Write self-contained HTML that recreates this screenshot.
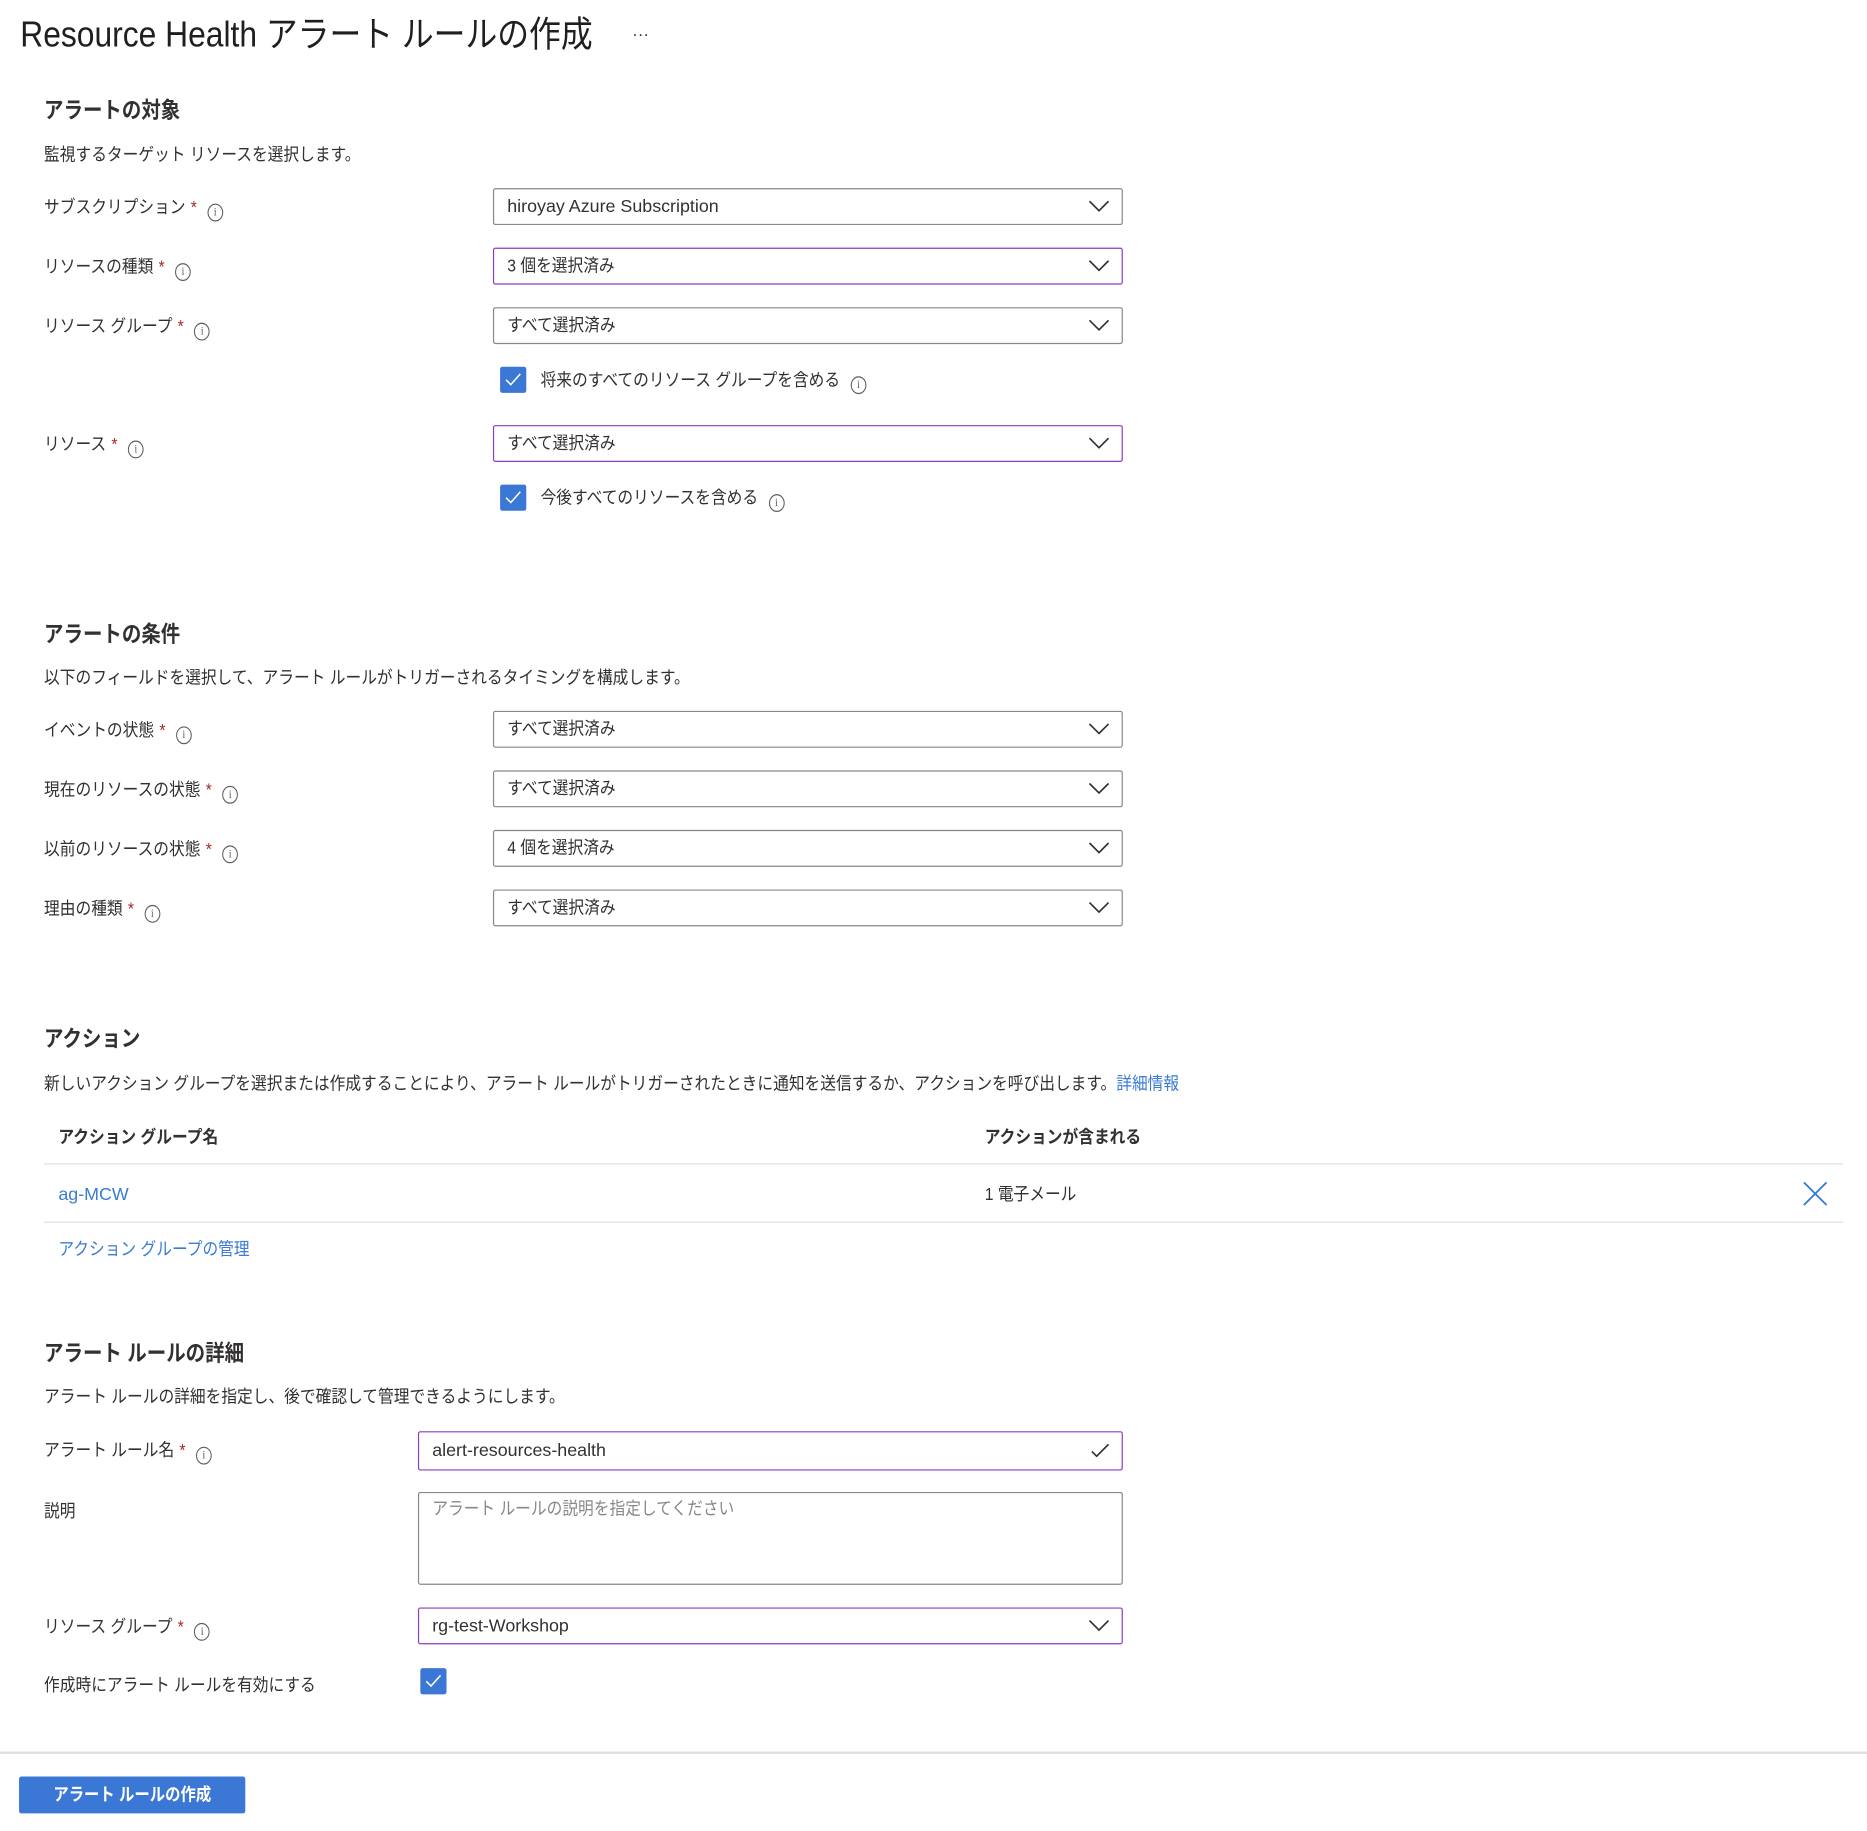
<!DOCTYPE html>
<html><head><meta charset="utf-8"><style>
*{box-sizing:border-box;margin:0;padding:0}
html,body{width:1867px;height:1831px;overflow:hidden;background:#fff}
#w{width:1568px;height:1538px;transform:scale(1.1907);transform-origin:0 0;position:relative;font-family:"Segoe UI","Liberation Sans","Noto Sans CJK JP",sans-serif;color:#323130;font-size:15px}
.a{position:absolute;white-space:nowrap;line-height:20px;transform:scaleX(.88);transform-origin:0 50%;margin-top:2px}
.n{transform:none}
.c{display:inline-block;transform:scaleX(.88);transform-origin:0 50%}
.h{font-size:19px;font-weight:bold;color:#323130;transform:scaleX(.86);margin-top:4px}
.st{color:#a4262c;margin-left:5px}
.i{display:inline-block;width:15px;height:15px;border:1px solid #605e5c;border-radius:50%;font-size:10px;line-height:13px;text-align:center;color:#605e5c;margin-left:10px;vertical-align:-2px;font-family:"Liberation Serif",serif}
.dd{position:absolute;left:414px;width:529px;height:31px;border:1px solid #8a8886;border-radius:2px;padding-left:11px;line-height:30px;white-space:nowrap}
.p{border-color:#8a3fc0}
.dd svg{position:absolute;right:10px;top:8px}
.cb{position:absolute;width:22px;height:22px;background:#3b78d6;border-radius:2px}
.cb svg{position:absolute;left:4px;top:5px}
.lk{color:#3a7bd5}
.ln{position:absolute;height:1px;background:#e1dfdd}
</style></head><body><div id="w">
<div class="a" style="left:17px;top:10px;font-size:30px;line-height:36px;color:#201f1e;transform:scaleX(.89)">Resource Health アラート ルールの作成</div>
<div class="a n" style="left:531px;top:16px;font-size:14px">···</div>

<div class="a h" style="left:37px;top:80px">アラートの対象</div>
<div class="a" style="left:37px;top:119px">監視するターゲット リソースを選択します。</div>
<div class="a" style="left:37px;top:163px">サブスクリプション<span class="st">*</span><span class="i">i</span></div>
<div class="dd" style="top:158px">hiroyay Azure Subscription<svg width="18" height="12"><path d="M1 2l8 8 8-8" fill="none" stroke="#323130" stroke-width="1.4"/></svg></div>
<div class="a" style="left:37px;top:213px">リソースの種類<span class="st">*</span><span class="i">i</span></div>
<div class="dd p" style="top:208px"><span class="c">3 個を選択済み</span><svg width="18" height="12"><path d="M1 2l8 8 8-8" fill="none" stroke="#323130" stroke-width="1.4"/></svg></div>
<div class="a" style="left:37px;top:263px">リソース グループ<span class="st">*</span><span class="i">i</span></div>
<div class="dd" style="top:258px"><span class="c">すべて選択済み</span><svg width="18" height="12"><path d="M1 2l8 8 8-8" fill="none" stroke="#323130" stroke-width="1.4"/></svg></div>
<div class="cb" style="left:420px;top:308px"><svg width="14" height="12"><path d="M1 6l4 4 8-9" fill="none" stroke="#fff" stroke-width="1.3"/></svg></div>
<div class="a" style="left:454px;top:308px">将来のすべてのリソース グループを含める<span class="i">i</span></div>
<div class="a" style="left:37px;top:362px">リソース<span class="st">*</span><span class="i">i</span></div>
<div class="dd p" style="top:357px"><span class="c">すべて選択済み</span><svg width="18" height="12"><path d="M1 2l8 8 8-8" fill="none" stroke="#323130" stroke-width="1.4"/></svg></div>
<div class="cb" style="left:420px;top:407px"><svg width="14" height="12"><path d="M1 6l4 4 8-9" fill="none" stroke="#fff" stroke-width="1.3"/></svg></div>
<div class="a" style="left:454px;top:407px">今後すべてのリソースを含める<span class="i">i</span></div>

<div class="a h" style="left:37px;top:520px">アラートの条件</div>
<div class="a" style="left:37px;top:558px">以下のフィールドを選択して、アラート ルールがトリガーされるタイミングを構成します。</div>
<div class="a" style="left:37px;top:602px">イベントの状態<span class="st">*</span><span class="i">i</span></div>
<div class="dd" style="top:597px"><span class="c">すべて選択済み</span><svg width="18" height="12"><path d="M1 2l8 8 8-8" fill="none" stroke="#323130" stroke-width="1.4"/></svg></div>
<div class="a" style="left:37px;top:652px">現在のリソースの状態<span class="st">*</span><span class="i">i</span></div>
<div class="dd" style="top:647px"><span class="c">すべて選択済み</span><svg width="18" height="12"><path d="M1 2l8 8 8-8" fill="none" stroke="#323130" stroke-width="1.4"/></svg></div>
<div class="a" style="left:37px;top:702px">以前のリソースの状態<span class="st">*</span><span class="i">i</span></div>
<div class="dd" style="top:697px"><span class="c">4 個を選択済み</span><svg width="18" height="12"><path d="M1 2l8 8 8-8" fill="none" stroke="#323130" stroke-width="1.4"/></svg></div>
<div class="a" style="left:37px;top:752px">理由の種類<span class="st">*</span><span class="i">i</span></div>
<div class="dd" style="top:747px"><span class="c">すべて選択済み</span><svg width="18" height="12"><path d="M1 2l8 8 8-8" fill="none" stroke="#323130" stroke-width="1.4"/></svg></div>

<div class="a h" style="left:37px;top:860px">アクション</div>
<div class="a" style="left:37px;top:899px">新しいアクション グループを選択または作成することにより、アラート ルールがトリガーされたときに通知を送信するか、アクションを呼び出します。<span class="lk">詳細情報</span></div>
<div class="a" style="left:49px;top:944px;font-weight:bold">アクション グループ名</div>
<div class="a" style="left:827px;top:944px;font-weight:bold">アクションが含まれる</div>
<div class="ln" style="left:37px;top:977px;width:1511px"></div>
<div class="a lk n" style="left:49px;top:992px">ag-MCW</div>
<div class="a" style="left:827px;top:992px">1 電子メール</div>
<svg style="position:absolute;left:1514px;top:992px" width="21" height="21"><path d="M1 1l19 19M20 1L1 20" stroke="#3a7bd5" stroke-width="1.6"/></svg>
<div class="ln" style="left:37px;top:1026px;width:1511px"></div>
<div class="a lk" style="left:49px;top:1038px">アクション グループの管理</div>

<div class="a h" style="left:37px;top:1124px">アラート ルールの詳細</div>
<div class="a" style="left:37px;top:1162px">アラート ルールの詳細を指定し、後で確認して管理できるようにします。</div>
<div class="a" style="left:37px;top:1207px">アラート ルール名<span class="st">*</span><span class="i">i</span></div>
<div class="dd p" style="left:351px;width:592px;top:1202px;height:33px;line-height:31px">alert-resources-health<svg style="top:9px" width="16" height="13"><path d="M1 7l4 4 10-10" fill="none" stroke="#323130" stroke-width="1.4"/></svg></div>
<div class="a" style="left:37px;top:1258px">説明</div>
<div class="dd" style="left:351px;width:592px;top:1253px;height:78px;line-height:28px;color:#8a8886"><span class="c">アラート ルールの説明を指定してください</span></div>
<div class="a" style="left:37px;top:1355px">リソース グループ<span class="st">*</span><span class="i">i</span></div>
<div class="dd p" style="left:351px;width:592px;top:1350px">rg-test-Workshop<svg width="18" height="12"><path d="M1 2l8 8 8-8" fill="none" stroke="#323130" stroke-width="1.4"/></svg></div>
<div class="a" style="left:37px;top:1404px">作成時にアラート ルールを有効にする</div>
<div class="cb" style="left:353px;top:1401px"><svg width="14" height="12"><path d="M1 6l4 4 8-9" fill="none" stroke="#fff" stroke-width="1.3"/></svg></div>

<div class="ln" style="left:0;top:1471px;width:1568px;height:2px;background:#e1dfdd"></div>
<div style="position:absolute;left:16px;top:1492px;width:190px;height:31px;background:#3b78d6;border-radius:2px;color:#fff;font-weight:bold;font-size:15px;text-align:center;line-height:31px"><span style="display:inline-block;transform:scaleX(.86)">アラート ルールの作成</span></div>
</div></body></html>
